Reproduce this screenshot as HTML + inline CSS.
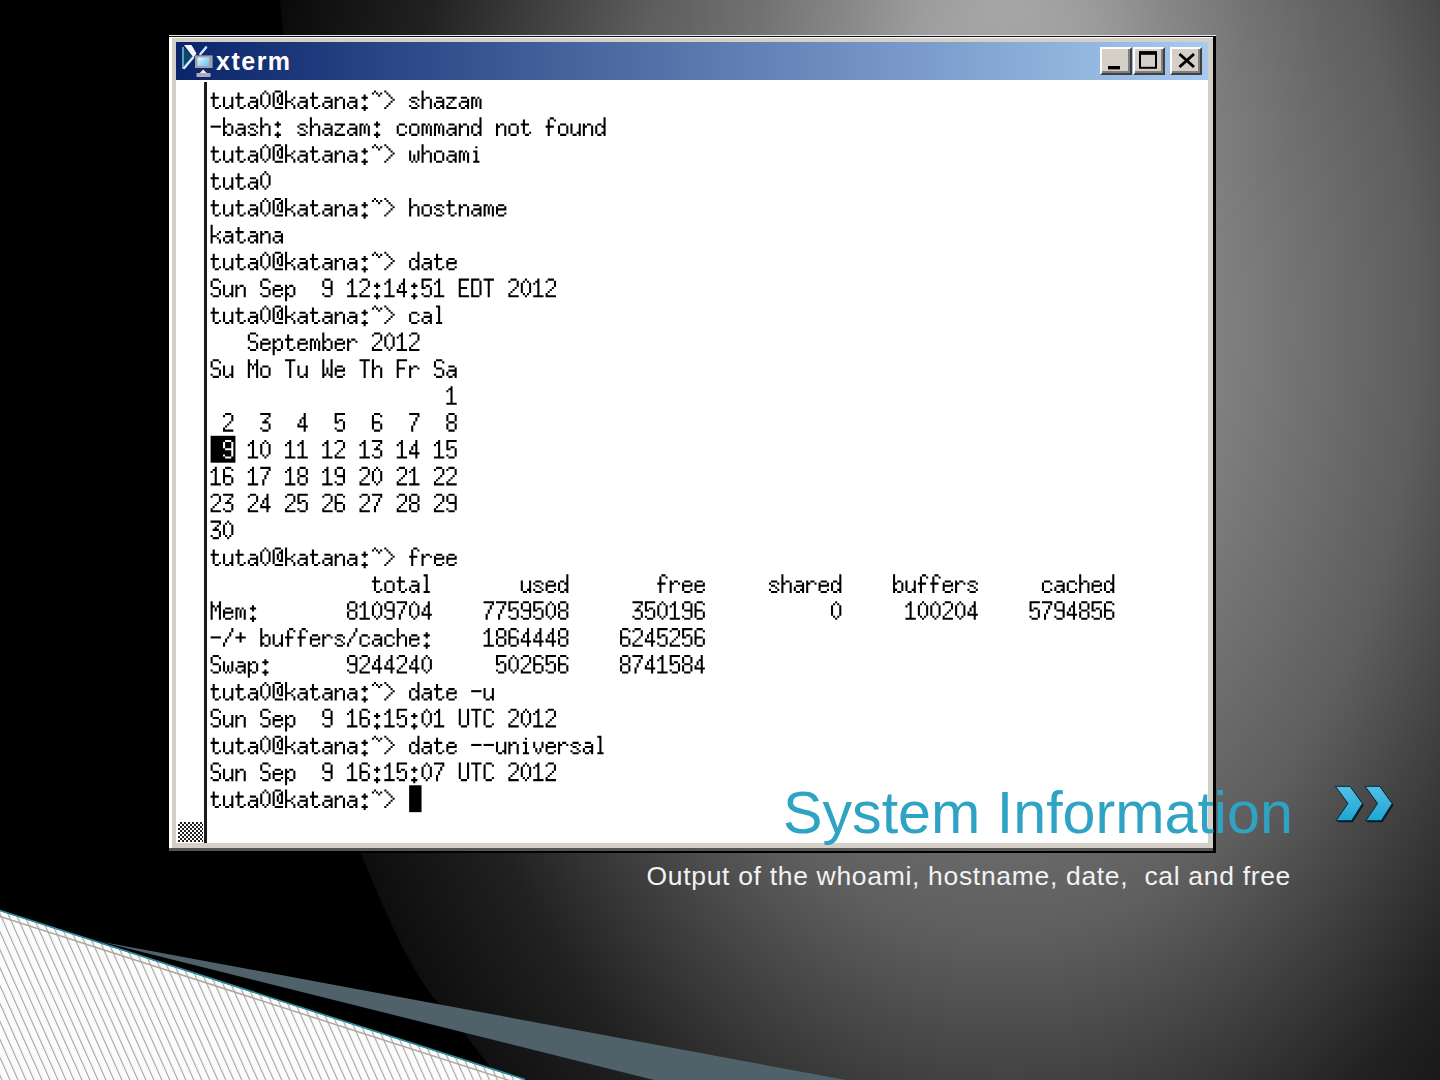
<!DOCTYPE html>
<html><head><meta charset="utf-8">
<style>
html,body{margin:0;padding:0;width:1440px;height:1080px;overflow:hidden;background:#000}
.abs{position:absolute}
#bg{position:absolute;left:0;top:0}
#win{position:absolute;left:169px;top:35px;width:1047px;height:818px;background:#d4d0c8}
#tb{position:absolute;left:176px;top:42px;width:1032px;height:38px;background:linear-gradient(to right,#0a246a,#a6caf0)}
#client{position:absolute;left:176px;top:80px;width:1032px;height:763px;background:#fff;overflow:hidden}
.btn{position:absolute;top:47px;width:32px;height:28px;background:#d4d0c8;box-sizing:border-box;border-top:2px solid #fff;border-left:2px solid #fff;border-right:2px solid #404040;border-bottom:2px solid #404040;box-shadow:inset -2px -2px 0 #808080}
#title{position:absolute;left:783px;top:782.5px;font-family:"Liberation Sans",sans-serif;font-size:59.2px;color:#2fa3c4;white-space:pre;line-height:1}
#sub{position:absolute;left:646.5px;top:862.5px;font-family:"Liberation Sans",sans-serif;font-size:26.5px;letter-spacing:0.68px;color:#f2f2f2;white-space:pre;line-height:1}
</style></head><body>
<svg id="bg" width="1440" height="1080" viewBox="0 0 1440 1080">
<defs>
<radialGradient id="spot" gradientUnits="userSpaceOnUse" cx="1007" cy="322" r="818.4" gradientTransform="translate(1007 322) scale(1 1.5103) translate(-1007 -322)">
<stop offset="0" stop-color="rgb(135,135,135)"/>
<stop offset="0.25" stop-color="rgb(130,130,130)"/>
<stop offset="0.5" stop-color="rgb(94,94,94)"/>
<stop offset="0.75" stop-color="rgb(33,33,33)"/>
<stop offset="1" stop-color="rgb(0,0,0)"/>
</radialGradient>
<radialGradient id="hl" gradientUnits="userSpaceOnUse" cx="1005" cy="0" r="322">
<stop offset="0" stop-color="#fff" stop-opacity="0.3"/>
<stop offset="0.25" stop-color="#fff" stop-opacity="0.234"/>
<stop offset="0.5" stop-color="#fff" stop-opacity="0.11"/>
<stop offset="0.75" stop-color="#fff" stop-opacity="0.032"/>
<stop offset="1" stop-color="#fff" stop-opacity="0"/>
</radialGradient>
<pattern id="hatch" patternUnits="userSpaceOnUse" width="7.3" height="18" patternTransform="rotate(-24)">
<rect width="7.3" height="18" fill="#fcfcfc"/>
<rect x="0" width="1.1" height="18" fill="#a4a4a4"/>
</pattern>
</defs>
<path d="M280,0 L1440,0 L1440,1080 L500,1080 C470,1040 450,1015 433.7,998 C410,965 395,935 360.5,853 Z" fill="url(#spot)"/>
<rect x="0" y="0" width="1440" height="1080" fill="url(#hl)"/>
<polygon points="100,941.5 846,1080 654,1080" fill="#4f6169"/>
<polygon points="0,911 525,1080 0,1080" fill="url(#hatch)"/>
<line x1="0" y1="916.5" x2="525" y2="1085.5" stroke="#b0a8a0" stroke-width="1.5"/>
<line x1="0" y1="910.5" x2="525" y2="1079.5" stroke="#2a90a0" stroke-width="1.6"/>
</svg>

<div id="win"></div>
<div class="abs" style="left:169px;top:35px;width:1047px;height:1px;background:#e8e8e8"></div>
<div class="abs" style="left:169px;top:36px;width:1047px;height:1px;background:#111"></div>
<div class="abs" style="left:169px;top:37px;width:1044px;height:1px;background:#fff"></div>
<div class="abs" style="left:169px;top:37px;width:2.5px;height:815px;background:#fff"></div>
<div class="abs" style="left:1213px;top:36px;width:3px;height:817px;background:#000"></div>
<div class="abs" style="left:169px;top:851px;width:1047px;height:2px;background:#000"></div>
<div class="abs" style="left:169px;top:848px;width:1044px;height:3px;background:#555"></div>
<div id="tb"></div>
<div id="client">
<div class="abs" style="left:28.3px;top:2px;width:2.6px;height:761px;background:#1a1a1a"></div>
<div class="abs" style="left:1.5px;top:742px;width:25.5px;height:20px;background-image:repeating-conic-gradient(#222 0 25%,#fff 0 50%);background-size:4px 4px"></div>

</div>
<!--TERM--><svg class="abs" style="left:0;top:0" width="1440" height="1080" viewBox="0 0 1440 1080"><defs><path id="g0" d="M2 4h1v1h-1zM2 5h1v1h-1zM0 6h5v1h-5zM2 7h1v1h-1zM2 8h1v1h-1z"/><path id="g1" d="M0 6h5v1h-5z"/><path id="g2" d="M4 2h1v1h-1zM4 3h1v1h-1zM3 4h1v1h-1zM3 5h1v1h-1zM2 6h1v1h-1zM1 7h1v1h-1zM1 8h1v1h-1zM0 9h1v1h-1zM0 10h1v1h-1z"/><path id="g3" d="M2 2h1v1h-1zM1 3h1v1h-1zM3 3h1v1h-1zM0 4h1v1h-1zM4 4h1v1h-1zM0 5h1v1h-1zM4 5h1v1h-1zM0 6h1v1h-1zM4 6h1v1h-1zM0 7h1v1h-1zM4 7h1v1h-1zM0 8h1v1h-1zM4 8h1v1h-1zM1 9h1v1h-1zM3 9h1v1h-1zM2 10h1v1h-1z"/><path id="g4" d="M2 2h1v1h-1zM1 3h2v1h-2zM0 4h1v1h-1zM2 4h1v1h-1zM2 5h1v1h-1zM2 6h1v1h-1zM2 7h1v1h-1zM2 8h1v1h-1zM2 9h1v1h-1zM0 10h5v1h-5z"/><path id="g5" d="M1 2h3v1h-3zM0 3h1v1h-1zM4 3h1v1h-1zM4 4h1v1h-1zM4 5h1v1h-1zM3 6h1v1h-1zM2 7h1v1h-1zM1 8h1v1h-1zM0 9h1v1h-1zM0 10h5v1h-5z"/><path id="g6" d="M0 2h5v1h-5zM4 3h1v1h-1zM3 4h1v1h-1zM2 5h1v1h-1zM1 6h3v1h-3zM4 7h1v1h-1zM4 8h1v1h-1zM0 9h1v1h-1zM4 9h1v1h-1zM1 10h3v1h-3z"/><path id="g7" d="M3 2h1v1h-1zM3 3h1v1h-1zM2 4h2v1h-2zM1 5h1v1h-1zM3 5h1v1h-1zM1 6h1v1h-1zM3 6h1v1h-1zM0 7h1v1h-1zM3 7h1v1h-1zM0 8h5v1h-5zM3 9h1v1h-1zM3 10h1v1h-1z"/><path id="g8" d="M0 2h5v1h-5zM0 3h1v1h-1zM0 4h1v1h-1zM0 5h1v1h-1zM2 5h2v1h-2zM0 6h2v1h-2zM4 6h1v1h-1zM4 7h1v1h-1zM4 8h1v1h-1zM0 9h1v1h-1zM4 9h1v1h-1zM1 10h3v1h-3z"/><path id="g9" d="M1 2h3v1h-3zM0 3h1v1h-1zM4 3h1v1h-1zM0 4h1v1h-1zM0 5h1v1h-1zM0 6h4v1h-4zM0 7h1v1h-1zM4 7h1v1h-1zM0 8h1v1h-1zM4 8h1v1h-1zM0 9h1v1h-1zM4 9h1v1h-1zM1 10h3v1h-3z"/><path id="g10" d="M0 2h5v1h-5zM4 3h1v1h-1zM3 4h1v1h-1zM3 5h1v1h-1zM2 6h1v1h-1zM2 7h1v1h-1zM1 8h1v1h-1zM1 9h1v1h-1zM1 10h1v1h-1z"/><path id="g11" d="M1 2h3v1h-3zM0 3h1v1h-1zM4 3h1v1h-1zM0 4h1v1h-1zM4 4h1v1h-1zM0 5h1v1h-1zM4 5h1v1h-1zM1 6h3v1h-3zM0 7h1v1h-1zM4 7h1v1h-1zM0 8h1v1h-1zM4 8h1v1h-1zM0 9h1v1h-1zM4 9h1v1h-1zM1 10h3v1h-3z"/><path id="g12" d="M1 2h3v1h-3zM0 3h1v1h-1zM4 3h1v1h-1zM0 4h1v1h-1zM4 4h1v1h-1zM0 5h1v1h-1zM4 5h1v1h-1zM1 6h4v1h-4zM4 7h1v1h-1zM4 8h1v1h-1zM0 9h1v1h-1zM4 9h1v1h-1zM1 10h3v1h-3z"/><path id="g13" d="M2 4h1v1h-1zM1 5h3v1h-3zM2 6h1v1h-1zM2 9h1v1h-1zM1 10h3v1h-3zM2 11h1v1h-1z"/><path id="g14" d="M0 2h1v1h-1zM1 3h1v1h-1zM2 4h1v1h-1zM3 5h1v1h-1zM4 6h1v1h-1zM3 7h1v1h-1zM2 8h1v1h-1zM1 9h1v1h-1zM0 10h1v1h-1z"/><path id="g15" d="M1 2h3v1h-3zM0 3h1v1h-1zM4 3h1v1h-1zM0 4h1v1h-1zM3 4h2v1h-2zM0 5h1v1h-1zM2 5h1v1h-1zM4 5h1v1h-1zM0 6h1v1h-1zM2 6h1v1h-1zM4 6h1v1h-1zM0 7h1v1h-1zM2 7h1v1h-1zM4 7h1v1h-1zM0 8h1v1h-1zM3 8h2v1h-2zM0 9h1v1h-1zM1 10h4v1h-4z"/><path id="g16" d="M1 2h3v1h-3zM0 3h1v1h-1zM4 3h1v1h-1zM0 4h1v1h-1zM0 5h1v1h-1zM0 6h1v1h-1zM0 7h1v1h-1zM0 8h1v1h-1zM0 9h1v1h-1zM4 9h1v1h-1zM1 10h3v1h-3z"/><path id="g17" d="M0 2h4v1h-4zM0 3h1v1h-1zM4 3h1v1h-1zM0 4h1v1h-1zM4 4h1v1h-1zM0 5h1v1h-1zM4 5h1v1h-1zM0 6h1v1h-1zM4 6h1v1h-1zM0 7h1v1h-1zM4 7h1v1h-1zM0 8h1v1h-1zM4 8h1v1h-1zM0 9h1v1h-1zM4 9h1v1h-1zM0 10h4v1h-4z"/><path id="g18" d="M0 2h5v1h-5zM0 3h1v1h-1zM0 4h1v1h-1zM0 5h1v1h-1zM0 6h4v1h-4zM0 7h1v1h-1zM0 8h1v1h-1zM0 9h1v1h-1zM0 10h5v1h-5z"/><path id="g19" d="M0 2h5v1h-5zM0 3h1v1h-1zM0 4h1v1h-1zM0 5h1v1h-1zM0 6h4v1h-4zM0 7h1v1h-1zM0 8h1v1h-1zM0 9h1v1h-1zM0 10h1v1h-1z"/><path id="g20" d="M0 2h1v1h-1zM4 2h1v1h-1zM0 3h1v1h-1zM4 3h1v1h-1zM0 4h2v1h-2zM3 4h2v1h-2zM0 5h1v1h-1zM2 5h1v1h-1zM4 5h1v1h-1zM0 6h1v1h-1zM2 6h1v1h-1zM4 6h1v1h-1zM0 7h1v1h-1zM4 7h1v1h-1zM0 8h1v1h-1zM4 8h1v1h-1zM0 9h1v1h-1zM4 9h1v1h-1zM0 10h1v1h-1zM4 10h1v1h-1z"/><path id="g21" d="M1 2h3v1h-3zM0 3h1v1h-1zM4 3h1v1h-1zM0 4h1v1h-1zM0 5h1v1h-1zM1 6h3v1h-3zM4 7h1v1h-1zM4 8h1v1h-1zM0 9h1v1h-1zM4 9h1v1h-1zM1 10h3v1h-3z"/><path id="g22" d="M0 2h5v1h-5zM2 3h1v1h-1zM2 4h1v1h-1zM2 5h1v1h-1zM2 6h1v1h-1zM2 7h1v1h-1zM2 8h1v1h-1zM2 9h1v1h-1zM2 10h1v1h-1z"/><path id="g23" d="M0 2h1v1h-1zM4 2h1v1h-1zM0 3h1v1h-1zM4 3h1v1h-1zM0 4h1v1h-1zM4 4h1v1h-1zM0 5h1v1h-1zM4 5h1v1h-1zM0 6h1v1h-1zM4 6h1v1h-1zM0 7h1v1h-1zM4 7h1v1h-1zM0 8h1v1h-1zM4 8h1v1h-1zM0 9h1v1h-1zM4 9h1v1h-1zM1 10h3v1h-3z"/><path id="g24" d="M0 2h1v1h-1zM4 2h1v1h-1zM0 3h1v1h-1zM4 3h1v1h-1zM0 4h1v1h-1zM4 4h1v1h-1zM0 5h1v1h-1zM4 5h1v1h-1zM0 6h1v1h-1zM2 6h1v1h-1zM4 6h1v1h-1zM0 7h1v1h-1zM2 7h1v1h-1zM4 7h1v1h-1zM0 8h1v1h-1zM2 8h1v1h-1zM4 8h1v1h-1zM0 9h2v1h-2zM3 9h2v1h-2zM0 10h1v1h-1zM4 10h1v1h-1z"/><path id="g25" d="M1 5h3v1h-3zM4 6h1v1h-1zM1 7h4v1h-4zM0 8h1v1h-1zM4 8h1v1h-1zM0 9h1v1h-1zM3 9h2v1h-2zM1 10h2v1h-2zM4 10h1v1h-1z"/><path id="g26" d="M0 2h1v1h-1zM0 3h1v1h-1zM0 4h1v1h-1zM0 5h1v1h-1zM2 5h2v1h-2zM0 6h2v1h-2zM4 6h1v1h-1zM0 7h1v1h-1zM4 7h1v1h-1zM0 8h1v1h-1zM4 8h1v1h-1zM0 9h2v1h-2zM4 9h1v1h-1zM0 10h1v1h-1zM2 10h2v1h-2z"/><path id="g27" d="M1 5h3v1h-3zM0 6h1v1h-1zM4 6h1v1h-1zM0 7h1v1h-1zM0 8h1v1h-1zM0 9h1v1h-1zM4 9h1v1h-1zM1 10h3v1h-3z"/><path id="g28" d="M4 2h1v1h-1zM4 3h1v1h-1zM4 4h1v1h-1zM1 5h2v1h-2zM4 5h1v1h-1zM0 6h1v1h-1zM3 6h2v1h-2zM0 7h1v1h-1zM4 7h1v1h-1zM0 8h1v1h-1zM4 8h1v1h-1zM0 9h1v1h-1zM3 9h2v1h-2zM1 10h2v1h-2zM4 10h1v1h-1z"/><path id="g29" d="M1 5h3v1h-3zM0 6h1v1h-1zM4 6h1v1h-1zM0 7h5v1h-5zM0 8h1v1h-1zM0 9h1v1h-1zM4 9h1v1h-1zM1 10h3v1h-3z"/><path id="g30" d="M2 2h2v1h-2zM1 3h1v1h-1zM4 3h1v1h-1zM1 4h1v1h-1zM1 5h1v1h-1zM0 6h4v1h-4zM1 7h1v1h-1zM1 8h1v1h-1zM1 9h1v1h-1zM1 10h1v1h-1z"/><path id="g31" d="M0 2h1v1h-1zM0 3h1v1h-1zM0 4h1v1h-1zM0 5h1v1h-1zM2 5h2v1h-2zM0 6h2v1h-2zM4 6h1v1h-1zM0 7h1v1h-1zM4 7h1v1h-1zM0 8h1v1h-1zM4 8h1v1h-1zM0 9h1v1h-1zM4 9h1v1h-1zM0 10h1v1h-1zM4 10h1v1h-1z"/><path id="g32" d="M2 3h1v1h-1zM1 5h2v1h-2zM2 6h1v1h-1zM2 7h1v1h-1zM2 8h1v1h-1zM2 9h1v1h-1zM1 10h3v1h-3z"/><path id="g33" d="M0 2h1v1h-1zM0 3h1v1h-1zM0 4h1v1h-1zM0 5h1v1h-1zM4 5h1v1h-1zM0 6h1v1h-1zM3 6h1v1h-1zM0 7h3v1h-3zM0 8h1v1h-1zM3 8h1v1h-1zM0 9h1v1h-1zM4 9h1v1h-1zM0 10h1v1h-1zM4 10h1v1h-1z"/><path id="g34" d="M1 2h2v1h-2zM2 3h1v1h-1zM2 4h1v1h-1zM2 5h1v1h-1zM2 6h1v1h-1zM2 7h1v1h-1zM2 8h1v1h-1zM2 9h1v1h-1zM1 10h3v1h-3z"/><path id="g35" d="M0 5h2v1h-2zM3 5h1v1h-1zM0 6h1v1h-1zM2 6h1v1h-1zM4 6h1v1h-1zM0 7h1v1h-1zM2 7h1v1h-1zM4 7h1v1h-1zM0 8h1v1h-1zM2 8h1v1h-1zM4 8h1v1h-1zM0 9h1v1h-1zM2 9h1v1h-1zM4 9h1v1h-1zM0 10h1v1h-1zM4 10h1v1h-1z"/><path id="g36" d="M0 5h1v1h-1zM2 5h2v1h-2zM0 6h2v1h-2zM4 6h1v1h-1zM0 7h1v1h-1zM4 7h1v1h-1zM0 8h1v1h-1zM4 8h1v1h-1zM0 9h1v1h-1zM4 9h1v1h-1zM0 10h1v1h-1zM4 10h1v1h-1z"/><path id="g37" d="M1 5h3v1h-3zM0 6h1v1h-1zM4 6h1v1h-1zM0 7h1v1h-1zM4 7h1v1h-1zM0 8h1v1h-1zM4 8h1v1h-1zM0 9h1v1h-1zM4 9h1v1h-1zM1 10h3v1h-3z"/><path id="g38" d="M0 5h1v1h-1zM2 5h2v1h-2zM0 6h2v1h-2zM4 6h1v1h-1zM0 7h1v1h-1zM4 7h1v1h-1zM0 8h1v1h-1zM4 8h1v1h-1zM0 9h2v1h-2zM4 9h1v1h-1zM0 10h1v1h-1zM2 10h2v1h-2zM0 11h1v1h-1zM0 12h1v1h-1z"/><path id="g39" d="M0 5h1v1h-1zM2 5h2v1h-2zM0 6h2v1h-2zM4 6h1v1h-1zM0 7h1v1h-1zM0 8h1v1h-1zM0 9h1v1h-1zM0 10h1v1h-1z"/><path id="g40" d="M1 5h3v1h-3zM0 6h1v1h-1zM4 6h1v1h-1zM1 7h2v1h-2zM3 8h1v1h-1zM0 9h1v1h-1zM4 9h1v1h-1zM1 10h3v1h-3z"/><path id="g41" d="M1 3h1v1h-1zM1 4h1v1h-1zM0 5h4v1h-4zM1 6h1v1h-1zM1 7h1v1h-1zM1 8h1v1h-1zM1 9h1v1h-1zM4 9h1v1h-1zM2 10h2v1h-2z"/><path id="g42" d="M0 5h1v1h-1zM4 5h1v1h-1zM0 6h1v1h-1zM4 6h1v1h-1zM0 7h1v1h-1zM4 7h1v1h-1zM0 8h1v1h-1zM4 8h1v1h-1zM0 9h1v1h-1zM3 9h2v1h-2zM1 10h2v1h-2zM4 10h1v1h-1z"/><path id="g43" d="M0 5h1v1h-1zM4 5h1v1h-1zM0 6h1v1h-1zM4 6h1v1h-1zM0 7h1v1h-1zM4 7h1v1h-1zM1 8h1v1h-1zM3 8h1v1h-1zM1 9h1v1h-1zM3 9h1v1h-1zM2 10h1v1h-1z"/><path id="g44" d="M0 5h1v1h-1zM4 5h1v1h-1zM0 6h1v1h-1zM4 6h1v1h-1zM0 7h1v1h-1zM2 7h1v1h-1zM4 7h1v1h-1zM0 8h1v1h-1zM2 8h1v1h-1zM4 8h1v1h-1zM0 9h1v1h-1zM2 9h1v1h-1zM4 9h1v1h-1zM1 10h1v1h-1zM3 10h1v1h-1z"/><path id="g45" d="M0 5h5v1h-5zM3 6h1v1h-1zM2 7h1v1h-1zM1 8h1v1h-1zM0 9h1v1h-1zM0 10h5v1h-5z"/><path id="g46" d="M1 2h1v1h-1zM0 3h1v1h-1zM2 3h1v1h-1zM4 3h1v1h-1zM3 4h1v1h-1z"/></defs><rect x="210.60" y="435.79" width="24.82" height="26.88" fill="#000"/><rect x="409.13" y="785.28" width="12.41" height="26.88" fill="#000"/><g transform="translate(210.6 86.3) scale(2.068)" fill="#000"><use href="#g41" x="0" y="0"/><use href="#g42" x="6" y="0"/><use href="#g41" x="12" y="0"/><use href="#g25" x="18" y="0"/><use href="#g3" x="24" y="0"/><use href="#g15" x="30" y="0"/><use href="#g33" x="36" y="0"/><use href="#g25" x="42" y="0"/><use href="#g41" x="48" y="0"/><use href="#g25" x="54" y="0"/><use href="#g36" x="60" y="0"/><use href="#g25" x="66" y="0"/><use href="#g13" x="72" y="0"/><use href="#g46" x="78" y="0"/><use href="#g14" x="84" y="0"/><use href="#g40" x="96" y="0"/><use href="#g31" x="102" y="0"/><use href="#g25" x="108" y="0"/><use href="#g45" x="114" y="0"/><use href="#g25" x="120" y="0"/><use href="#g35" x="126" y="0"/><use href="#g1" x="0" y="13"/><use href="#g26" x="6" y="13"/><use href="#g25" x="12" y="13"/><use href="#g40" x="18" y="13"/><use href="#g31" x="24" y="13"/><use href="#g13" x="30" y="13"/><use href="#g40" x="42" y="13"/><use href="#g31" x="48" y="13"/><use href="#g25" x="54" y="13"/><use href="#g45" x="60" y="13"/><use href="#g25" x="66" y="13"/><use href="#g35" x="72" y="13"/><use href="#g13" x="78" y="13"/><use href="#g27" x="90" y="13"/><use href="#g37" x="96" y="13"/><use href="#g35" x="102" y="13"/><use href="#g35" x="108" y="13"/><use href="#g25" x="114" y="13"/><use href="#g36" x="120" y="13"/><use href="#g28" x="126" y="13"/><use href="#g36" x="138" y="13"/><use href="#g37" x="144" y="13"/><use href="#g41" x="150" y="13"/><use href="#g30" x="162" y="13"/><use href="#g37" x="168" y="13"/><use href="#g42" x="174" y="13"/><use href="#g36" x="180" y="13"/><use href="#g28" x="186" y="13"/><use href="#g41" x="0" y="26"/><use href="#g42" x="6" y="26"/><use href="#g41" x="12" y="26"/><use href="#g25" x="18" y="26"/><use href="#g3" x="24" y="26"/><use href="#g15" x="30" y="26"/><use href="#g33" x="36" y="26"/><use href="#g25" x="42" y="26"/><use href="#g41" x="48" y="26"/><use href="#g25" x="54" y="26"/><use href="#g36" x="60" y="26"/><use href="#g25" x="66" y="26"/><use href="#g13" x="72" y="26"/><use href="#g46" x="78" y="26"/><use href="#g14" x="84" y="26"/><use href="#g44" x="96" y="26"/><use href="#g31" x="102" y="26"/><use href="#g37" x="108" y="26"/><use href="#g25" x="114" y="26"/><use href="#g35" x="120" y="26"/><use href="#g32" x="126" y="26"/><use href="#g41" x="0" y="39"/><use href="#g42" x="6" y="39"/><use href="#g41" x="12" y="39"/><use href="#g25" x="18" y="39"/><use href="#g3" x="24" y="39"/><use href="#g41" x="0" y="52"/><use href="#g42" x="6" y="52"/><use href="#g41" x="12" y="52"/><use href="#g25" x="18" y="52"/><use href="#g3" x="24" y="52"/><use href="#g15" x="30" y="52"/><use href="#g33" x="36" y="52"/><use href="#g25" x="42" y="52"/><use href="#g41" x="48" y="52"/><use href="#g25" x="54" y="52"/><use href="#g36" x="60" y="52"/><use href="#g25" x="66" y="52"/><use href="#g13" x="72" y="52"/><use href="#g46" x="78" y="52"/><use href="#g14" x="84" y="52"/><use href="#g31" x="96" y="52"/><use href="#g37" x="102" y="52"/><use href="#g40" x="108" y="52"/><use href="#g41" x="114" y="52"/><use href="#g36" x="120" y="52"/><use href="#g25" x="126" y="52"/><use href="#g35" x="132" y="52"/><use href="#g29" x="138" y="52"/><use href="#g33" x="0" y="65"/><use href="#g25" x="6" y="65"/><use href="#g41" x="12" y="65"/><use href="#g25" x="18" y="65"/><use href="#g36" x="24" y="65"/><use href="#g25" x="30" y="65"/><use href="#g41" x="0" y="78"/><use href="#g42" x="6" y="78"/><use href="#g41" x="12" y="78"/><use href="#g25" x="18" y="78"/><use href="#g3" x="24" y="78"/><use href="#g15" x="30" y="78"/><use href="#g33" x="36" y="78"/><use href="#g25" x="42" y="78"/><use href="#g41" x="48" y="78"/><use href="#g25" x="54" y="78"/><use href="#g36" x="60" y="78"/><use href="#g25" x="66" y="78"/><use href="#g13" x="72" y="78"/><use href="#g46" x="78" y="78"/><use href="#g14" x="84" y="78"/><use href="#g28" x="96" y="78"/><use href="#g25" x="102" y="78"/><use href="#g41" x="108" y="78"/><use href="#g29" x="114" y="78"/><use href="#g21" x="0" y="91"/><use href="#g42" x="6" y="91"/><use href="#g36" x="12" y="91"/><use href="#g21" x="24" y="91"/><use href="#g29" x="30" y="91"/><use href="#g38" x="36" y="91"/><use href="#g12" x="54" y="91"/><use href="#g4" x="66" y="91"/><use href="#g5" x="72" y="91"/><use href="#g13" x="78" y="91"/><use href="#g4" x="84" y="91"/><use href="#g7" x="90" y="91"/><use href="#g13" x="96" y="91"/><use href="#g8" x="102" y="91"/><use href="#g4" x="108" y="91"/><use href="#g18" x="120" y="91"/><use href="#g17" x="126" y="91"/><use href="#g22" x="132" y="91"/><use href="#g5" x="144" y="91"/><use href="#g3" x="150" y="91"/><use href="#g4" x="156" y="91"/><use href="#g5" x="162" y="91"/><use href="#g41" x="0" y="104"/><use href="#g42" x="6" y="104"/><use href="#g41" x="12" y="104"/><use href="#g25" x="18" y="104"/><use href="#g3" x="24" y="104"/><use href="#g15" x="30" y="104"/><use href="#g33" x="36" y="104"/><use href="#g25" x="42" y="104"/><use href="#g41" x="48" y="104"/><use href="#g25" x="54" y="104"/><use href="#g36" x="60" y="104"/><use href="#g25" x="66" y="104"/><use href="#g13" x="72" y="104"/><use href="#g46" x="78" y="104"/><use href="#g14" x="84" y="104"/><use href="#g27" x="96" y="104"/><use href="#g25" x="102" y="104"/><use href="#g34" x="108" y="104"/><use href="#g21" x="18" y="117"/><use href="#g29" x="24" y="117"/><use href="#g38" x="30" y="117"/><use href="#g41" x="36" y="117"/><use href="#g29" x="42" y="117"/><use href="#g35" x="48" y="117"/><use href="#g26" x="54" y="117"/><use href="#g29" x="60" y="117"/><use href="#g39" x="66" y="117"/><use href="#g5" x="78" y="117"/><use href="#g3" x="84" y="117"/><use href="#g4" x="90" y="117"/><use href="#g5" x="96" y="117"/><use href="#g21" x="0" y="130"/><use href="#g42" x="6" y="130"/><use href="#g20" x="18" y="130"/><use href="#g37" x="24" y="130"/><use href="#g22" x="36" y="130"/><use href="#g42" x="42" y="130"/><use href="#g24" x="54" y="130"/><use href="#g29" x="60" y="130"/><use href="#g22" x="72" y="130"/><use href="#g31" x="78" y="130"/><use href="#g19" x="90" y="130"/><use href="#g39" x="96" y="130"/><use href="#g21" x="108" y="130"/><use href="#g25" x="114" y="130"/><use href="#g4" x="114" y="143"/><use href="#g5" x="6" y="156"/><use href="#g6" x="24" y="156"/><use href="#g7" x="42" y="156"/><use href="#g8" x="60" y="156"/><use href="#g9" x="78" y="156"/><use href="#g10" x="96" y="156"/><use href="#g11" x="114" y="156"/><use href="#g12" x="6" y="169" fill="#fff"/><use href="#g4" x="18" y="169"/><use href="#g3" x="24" y="169"/><use href="#g4" x="36" y="169"/><use href="#g4" x="42" y="169"/><use href="#g4" x="54" y="169"/><use href="#g5" x="60" y="169"/><use href="#g4" x="72" y="169"/><use href="#g6" x="78" y="169"/><use href="#g4" x="90" y="169"/><use href="#g7" x="96" y="169"/><use href="#g4" x="108" y="169"/><use href="#g8" x="114" y="169"/><use href="#g4" x="0" y="182"/><use href="#g9" x="6" y="182"/><use href="#g4" x="18" y="182"/><use href="#g10" x="24" y="182"/><use href="#g4" x="36" y="182"/><use href="#g11" x="42" y="182"/><use href="#g4" x="54" y="182"/><use href="#g12" x="60" y="182"/><use href="#g5" x="72" y="182"/><use href="#g3" x="78" y="182"/><use href="#g5" x="90" y="182"/><use href="#g4" x="96" y="182"/><use href="#g5" x="108" y="182"/><use href="#g5" x="114" y="182"/><use href="#g5" x="0" y="195"/><use href="#g6" x="6" y="195"/><use href="#g5" x="18" y="195"/><use href="#g7" x="24" y="195"/><use href="#g5" x="36" y="195"/><use href="#g8" x="42" y="195"/><use href="#g5" x="54" y="195"/><use href="#g9" x="60" y="195"/><use href="#g5" x="72" y="195"/><use href="#g10" x="78" y="195"/><use href="#g5" x="90" y="195"/><use href="#g11" x="96" y="195"/><use href="#g5" x="108" y="195"/><use href="#g12" x="114" y="195"/><use href="#g6" x="0" y="208"/><use href="#g3" x="6" y="208"/><use href="#g41" x="0" y="221"/><use href="#g42" x="6" y="221"/><use href="#g41" x="12" y="221"/><use href="#g25" x="18" y="221"/><use href="#g3" x="24" y="221"/><use href="#g15" x="30" y="221"/><use href="#g33" x="36" y="221"/><use href="#g25" x="42" y="221"/><use href="#g41" x="48" y="221"/><use href="#g25" x="54" y="221"/><use href="#g36" x="60" y="221"/><use href="#g25" x="66" y="221"/><use href="#g13" x="72" y="221"/><use href="#g46" x="78" y="221"/><use href="#g14" x="84" y="221"/><use href="#g30" x="96" y="221"/><use href="#g39" x="102" y="221"/><use href="#g29" x="108" y="221"/><use href="#g29" x="114" y="221"/><use href="#g41" x="78" y="234"/><use href="#g37" x="84" y="234"/><use href="#g41" x="90" y="234"/><use href="#g25" x="96" y="234"/><use href="#g34" x="102" y="234"/><use href="#g42" x="150" y="234"/><use href="#g40" x="156" y="234"/><use href="#g29" x="162" y="234"/><use href="#g28" x="168" y="234"/><use href="#g30" x="216" y="234"/><use href="#g39" x="222" y="234"/><use href="#g29" x="228" y="234"/><use href="#g29" x="234" y="234"/><use href="#g40" x="270" y="234"/><use href="#g31" x="276" y="234"/><use href="#g25" x="282" y="234"/><use href="#g39" x="288" y="234"/><use href="#g29" x="294" y="234"/><use href="#g28" x="300" y="234"/><use href="#g26" x="330" y="234"/><use href="#g42" x="336" y="234"/><use href="#g30" x="342" y="234"/><use href="#g30" x="348" y="234"/><use href="#g29" x="354" y="234"/><use href="#g39" x="360" y="234"/><use href="#g40" x="366" y="234"/><use href="#g27" x="402" y="234"/><use href="#g25" x="408" y="234"/><use href="#g27" x="414" y="234"/><use href="#g31" x="420" y="234"/><use href="#g29" x="426" y="234"/><use href="#g28" x="432" y="234"/><use href="#g20" x="0" y="247"/><use href="#g29" x="6" y="247"/><use href="#g35" x="12" y="247"/><use href="#g13" x="18" y="247"/><use href="#g11" x="66" y="247"/><use href="#g4" x="72" y="247"/><use href="#g3" x="78" y="247"/><use href="#g12" x="84" y="247"/><use href="#g10" x="90" y="247"/><use href="#g3" x="96" y="247"/><use href="#g7" x="102" y="247"/><use href="#g10" x="132" y="247"/><use href="#g10" x="138" y="247"/><use href="#g8" x="144" y="247"/><use href="#g12" x="150" y="247"/><use href="#g8" x="156" y="247"/><use href="#g3" x="162" y="247"/><use href="#g11" x="168" y="247"/><use href="#g6" x="204" y="247"/><use href="#g8" x="210" y="247"/><use href="#g3" x="216" y="247"/><use href="#g4" x="222" y="247"/><use href="#g12" x="228" y="247"/><use href="#g9" x="234" y="247"/><use href="#g3" x="300" y="247"/><use href="#g4" x="336" y="247"/><use href="#g3" x="342" y="247"/><use href="#g3" x="348" y="247"/><use href="#g5" x="354" y="247"/><use href="#g3" x="360" y="247"/><use href="#g7" x="366" y="247"/><use href="#g8" x="396" y="247"/><use href="#g10" x="402" y="247"/><use href="#g12" x="408" y="247"/><use href="#g7" x="414" y="247"/><use href="#g11" x="420" y="247"/><use href="#g8" x="426" y="247"/><use href="#g9" x="432" y="247"/><use href="#g1" x="0" y="260"/><use href="#g2" x="6" y="260"/><use href="#g0" x="12" y="260"/><use href="#g26" x="24" y="260"/><use href="#g42" x="30" y="260"/><use href="#g30" x="36" y="260"/><use href="#g30" x="42" y="260"/><use href="#g29" x="48" y="260"/><use href="#g39" x="54" y="260"/><use href="#g40" x="60" y="260"/><use href="#g2" x="66" y="260"/><use href="#g27" x="72" y="260"/><use href="#g25" x="78" y="260"/><use href="#g27" x="84" y="260"/><use href="#g31" x="90" y="260"/><use href="#g29" x="96" y="260"/><use href="#g13" x="102" y="260"/><use href="#g4" x="132" y="260"/><use href="#g11" x="138" y="260"/><use href="#g9" x="144" y="260"/><use href="#g7" x="150" y="260"/><use href="#g7" x="156" y="260"/><use href="#g7" x="162" y="260"/><use href="#g11" x="168" y="260"/><use href="#g9" x="198" y="260"/><use href="#g5" x="204" y="260"/><use href="#g7" x="210" y="260"/><use href="#g8" x="216" y="260"/><use href="#g5" x="222" y="260"/><use href="#g8" x="228" y="260"/><use href="#g9" x="234" y="260"/><use href="#g21" x="0" y="273"/><use href="#g44" x="6" y="273"/><use href="#g25" x="12" y="273"/><use href="#g38" x="18" y="273"/><use href="#g13" x="24" y="273"/><use href="#g12" x="66" y="273"/><use href="#g5" x="72" y="273"/><use href="#g7" x="78" y="273"/><use href="#g7" x="84" y="273"/><use href="#g5" x="90" y="273"/><use href="#g7" x="96" y="273"/><use href="#g3" x="102" y="273"/><use href="#g8" x="138" y="273"/><use href="#g3" x="144" y="273"/><use href="#g5" x="150" y="273"/><use href="#g9" x="156" y="273"/><use href="#g8" x="162" y="273"/><use href="#g9" x="168" y="273"/><use href="#g11" x="198" y="273"/><use href="#g10" x="204" y="273"/><use href="#g7" x="210" y="273"/><use href="#g4" x="216" y="273"/><use href="#g8" x="222" y="273"/><use href="#g11" x="228" y="273"/><use href="#g7" x="234" y="273"/><use href="#g41" x="0" y="286"/><use href="#g42" x="6" y="286"/><use href="#g41" x="12" y="286"/><use href="#g25" x="18" y="286"/><use href="#g3" x="24" y="286"/><use href="#g15" x="30" y="286"/><use href="#g33" x="36" y="286"/><use href="#g25" x="42" y="286"/><use href="#g41" x="48" y="286"/><use href="#g25" x="54" y="286"/><use href="#g36" x="60" y="286"/><use href="#g25" x="66" y="286"/><use href="#g13" x="72" y="286"/><use href="#g46" x="78" y="286"/><use href="#g14" x="84" y="286"/><use href="#g28" x="96" y="286"/><use href="#g25" x="102" y="286"/><use href="#g41" x="108" y="286"/><use href="#g29" x="114" y="286"/><use href="#g1" x="126" y="286"/><use href="#g42" x="132" y="286"/><use href="#g21" x="0" y="299"/><use href="#g42" x="6" y="299"/><use href="#g36" x="12" y="299"/><use href="#g21" x="24" y="299"/><use href="#g29" x="30" y="299"/><use href="#g38" x="36" y="299"/><use href="#g12" x="54" y="299"/><use href="#g4" x="66" y="299"/><use href="#g9" x="72" y="299"/><use href="#g13" x="78" y="299"/><use href="#g4" x="84" y="299"/><use href="#g8" x="90" y="299"/><use href="#g13" x="96" y="299"/><use href="#g3" x="102" y="299"/><use href="#g4" x="108" y="299"/><use href="#g23" x="120" y="299"/><use href="#g22" x="126" y="299"/><use href="#g16" x="132" y="299"/><use href="#g5" x="144" y="299"/><use href="#g3" x="150" y="299"/><use href="#g4" x="156" y="299"/><use href="#g5" x="162" y="299"/><use href="#g41" x="0" y="312"/><use href="#g42" x="6" y="312"/><use href="#g41" x="12" y="312"/><use href="#g25" x="18" y="312"/><use href="#g3" x="24" y="312"/><use href="#g15" x="30" y="312"/><use href="#g33" x="36" y="312"/><use href="#g25" x="42" y="312"/><use href="#g41" x="48" y="312"/><use href="#g25" x="54" y="312"/><use href="#g36" x="60" y="312"/><use href="#g25" x="66" y="312"/><use href="#g13" x="72" y="312"/><use href="#g46" x="78" y="312"/><use href="#g14" x="84" y="312"/><use href="#g28" x="96" y="312"/><use href="#g25" x="102" y="312"/><use href="#g41" x="108" y="312"/><use href="#g29" x="114" y="312"/><use href="#g1" x="126" y="312"/><use href="#g1" x="132" y="312"/><use href="#g42" x="138" y="312"/><use href="#g36" x="144" y="312"/><use href="#g32" x="150" y="312"/><use href="#g43" x="156" y="312"/><use href="#g29" x="162" y="312"/><use href="#g39" x="168" y="312"/><use href="#g40" x="174" y="312"/><use href="#g25" x="180" y="312"/><use href="#g34" x="186" y="312"/><use href="#g21" x="0" y="325"/><use href="#g42" x="6" y="325"/><use href="#g36" x="12" y="325"/><use href="#g21" x="24" y="325"/><use href="#g29" x="30" y="325"/><use href="#g38" x="36" y="325"/><use href="#g12" x="54" y="325"/><use href="#g4" x="66" y="325"/><use href="#g9" x="72" y="325"/><use href="#g13" x="78" y="325"/><use href="#g4" x="84" y="325"/><use href="#g8" x="90" y="325"/><use href="#g13" x="96" y="325"/><use href="#g3" x="102" y="325"/><use href="#g10" x="108" y="325"/><use href="#g23" x="120" y="325"/><use href="#g22" x="126" y="325"/><use href="#g16" x="132" y="325"/><use href="#g5" x="144" y="325"/><use href="#g3" x="150" y="325"/><use href="#g4" x="156" y="325"/><use href="#g5" x="162" y="325"/><use href="#g41" x="0" y="338"/><use href="#g42" x="6" y="338"/><use href="#g41" x="12" y="338"/><use href="#g25" x="18" y="338"/><use href="#g3" x="24" y="338"/><use href="#g15" x="30" y="338"/><use href="#g33" x="36" y="338"/><use href="#g25" x="42" y="338"/><use href="#g41" x="48" y="338"/><use href="#g25" x="54" y="338"/><use href="#g36" x="60" y="338"/><use href="#g25" x="66" y="338"/><use href="#g13" x="72" y="338"/><use href="#g46" x="78" y="338"/><use href="#g14" x="84" y="338"/></g></svg><!--/TERM-->
<div class="btn" style="left:1100px"></div>
<div class="btn" style="left:1133px"></div>
<div class="btn" style="left:1170px"></div>
<svg class="abs" style="left:0;top:0" width="1440" height="1080" viewBox="0 0 1440 1080">
<rect x="1108" y="66" width="12" height="3.4" fill="#000"/>
<rect x="1140" y="52.3" width="16" height="15.5" fill="none" stroke="#000" stroke-width="2"/>
<rect x="1139" y="51.3" width="18" height="3.5" fill="#000"/>
<path d="M1179.5,54 L1194,67 M1194,54 L1179.5,67" stroke="#000" stroke-width="3" stroke-linecap="butt"/>
<!-- xterm icon -->
<defs><linearGradient id="scr" x1="0" y1="0" x2="1" y2="1"><stop offset="0" stop-color="#f4fbff"/><stop offset="0.5" stop-color="#9adcf8"/><stop offset="1" stop-color="#6cc4ee"/></linearGradient></defs>
<rect x="182" y="47" width="2" height="22" fill="#5b9ccc"/>
<polygon points="184,47.5 192.5,57 184,68.5" fill="#0b4868"/>
<polygon points="184,45 191.5,45 196.5,53.5 193.5,57.5" fill="#f2f8ff"/>
<path d="M193.5,57 L183.5,68.8" stroke="#d8ecff" stroke-width="2.4" fill="none"/>
<path d="M206,47.5 L200.5,54" stroke="#c8e4ff" stroke-width="2.6" stroke-linecap="round" fill="none"/>
<rect x="195" y="55.4" width="17.6" height="12.6" fill="#a49eac"/>
<rect x="197.5" y="57.5" width="11.5" height="8.5" fill="url(#scr)"/>
<polygon points="199.5,73.2 203.2,69.5 207,73.2" fill="#eeeeee"/>
<rect x="196.5" y="73" width="14" height="4" fill="#b4aab2"/>
</svg>
<div class="abs" style="left:216px;top:49px;font-family:'Liberation Sans',sans-serif;font-weight:bold;font-size:25px;letter-spacing:1.5px;color:#fff;line-height:1">xterm</div>

<div id="title">System Information</div>
<svg class="abs" style="left:0;top:0" width="1440" height="1080" viewBox="0 0 1440 1080">
<defs><linearGradient id="chg" x1="0" y1="0" x2="0" y2="1"><stop offset="0" stop-color="#52c0e6"/><stop offset="1" stop-color="#1ea6d2"/></linearGradient></defs>
<g transform="translate(1.3 1.6)" fill="#071a26"><polygon points="1335.4,786.3 1350,786.3 1362.5,803.5 1351.6,820.7 1336,820.7 1347.9,803.5"/><polygon points="1365.1,786.3 1379.7,786.3 1392.2,803.5 1381.3,820.7 1365.7,820.7 1377.6,803.5"/></g>
<polygon points="1335.4,786.3 1350,786.3 1362.5,803.5 1351.6,820.7 1336,820.7 1347.9,803.5" fill="url(#chg)" stroke="#0b2330" stroke-width="1" stroke-linejoin="miter"/>
<polygon points="1365.1,786.3 1379.7,786.3 1392.2,803.5 1381.3,820.7 1365.7,820.7 1377.6,803.5" fill="url(#chg)" stroke="#0b2330" stroke-width="1" stroke-linejoin="miter"/>
</svg>
<div id="sub">Output of the whoami, hostname, date,  cal and free</div>
</body></html>
